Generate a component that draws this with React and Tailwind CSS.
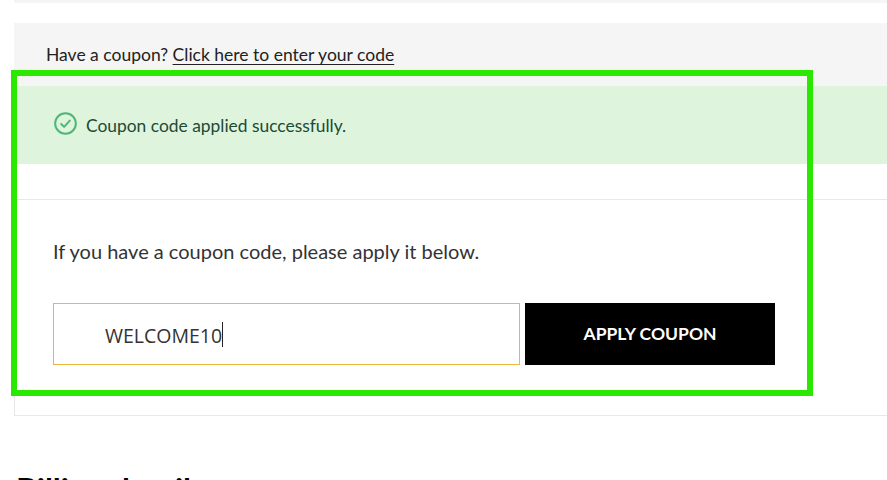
import { useState } from "react";

export default function App() {
  const [coupon, setCoupon] = useState("WELCOME10");

  return (
    <div className="relative h-[480px] overflow-hidden bg-white pl-[14px] font-['Lato',sans-serif]">
      <div className="h-[3px] bg-[#f5f5f5]"></div>

      {/* Coupon toggle */}
      <div className="mt-[20px] h-[63px] bg-[#f5f5f5] pl-[32px] pt-[19.5px] text-[17.5px] leading-6 text-[#222]">
        Have a coupon?{" "}
        <a href="#" className="underline underline-offset-[3px]">Click here to enter your code</a>
      </div>

      {/* Success message */}
      <div className="flex h-[78px] items-center gap-[9px] bg-[#dff4dd] pl-[40px] pt-[2px] text-[17.4px] text-[#1c4a33]">
        <svg className="mb-[5px]" width="23" height="23" viewBox="0 0 24 24" fill="none" stroke="#4cb877" strokeWidth="2.1" strokeLinecap="round" strokeLinejoin="round">
          <circle cx="12" cy="12" r="10.8" />
          <path d="M7.5 12.5l3 3 6-6.5" />
        </svg>
        <span>Coupon code applied successfully.</span>
      </div>

      <div className="h-[35px]"></div>

      {/* Coupon form */}
      <div className="h-[217px] border border-r-0 border-[#e8e8e8] pl-[38px] pt-[37px]">
        <p className="text-[20px] leading-7 text-[#333]">If you have a coupon code, please apply it below.</p>
        <div className="mt-[38px] flex gap-[5px]">
          <div className="relative">
            <input
              value={coupon}
              onChange={(e) => setCoupon(e.target.value)}
              className="h-[62px] w-[467px] border border-[#eeb63f] pl-[51px] pt-[2px] font-['Open_Sans',sans-serif] text-[19.5px] text-[#333] outline-none"
            />
            {/* text caret */}
            <span className="absolute left-[169px] top-[19px] h-[25px] w-px bg-[#222]"></span>
          </div>
          <button className="h-[62px] w-[250px] bg-black text-[17.5px] font-bold text-white">APPLY COUPON</button>
        </div>
      </div>

      <h3 className="ml-[2px] mt-[54px] text-[32px] font-bold leading-10 text-black">Billing details</h3>

      {/* Highlight frame */}
      <div className="pointer-events-none absolute left-[11px] top-[70px] h-[326px] w-[802px] border-[6px] border-[#2ae800]"></div>
    </div>
  );
}
